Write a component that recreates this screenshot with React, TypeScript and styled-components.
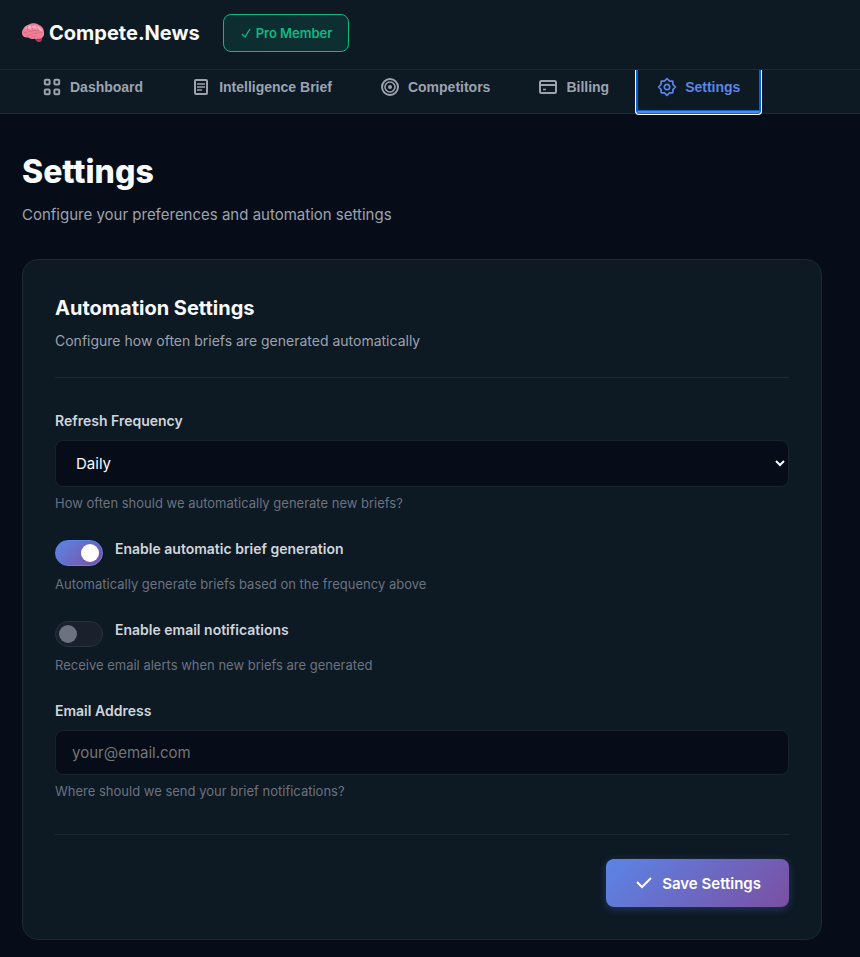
import React, { useState } from "react";
import styled, { createGlobalStyle, css } from "styled-components";

const GlobalStyle = createGlobalStyle`
  *, *::before, *::after { box-sizing: border-box; }
  body {
    margin: 0;
    background: #060d18;
    color: #f9fafb;
    font-family: Inter, "Liberation Sans", sans-serif;
    font-size: 15px;
    line-height: 24px;
  }
`;

const Page = styled.div`
  min-height: 100vh;
`;

const Header = styled.header`
  position: sticky;
  top: 0;
  z-index: 2;
  display: flex;
  align-items: center;
  gap: 23px;
  padding: 14px 22px 17px;
  background: #0d1923;
  border-bottom: 1px solid #1f2933;
`;

const Logo = styled.a`
  display: flex;
  align-items: center;
  gap: 4px;
  color: #f9fafb;
  font-size: 20px;
  font-weight: 700;
  text-decoration: none;
`;

const Badge = styled.span`
  display: flex;
  align-items: center;
  gap: 4px;
  height: 38px;
  padding: 0 16px;
  border: 1px solid #10b981;
  border-radius: 8px;
  background: linear-gradient(135deg, #0d2d30, #0e2f31);
  color: #10b981;
  font-size: 13px;
  font-weight: 600;
`;

const Nav = styled.nav`
  display: flex;
  gap: 8px;
  margin-top: -7px;
  padding: 0 22px;
  background: #0d1923;
  border-bottom: 1px solid #1f2933;
`;

const Tab = styled.button<{ $active?: boolean }>`
  display: flex;
  align-items: center;
  gap: 8px;
  padding: 14px 20px;
  border: 0;
  border-bottom: 2px solid ${(p) => (p.$active ? "#5b85e6" : "transparent")};
  background: none;
  color: ${(p) => (p.$active ? "#5b85e6" : "#9ca3af")};
  font-family: "Liberation Sans", Arial, sans-serif;
  font-size: 14px;
  font-weight: 600;
  line-height: 20px;
  white-space: nowrap;
  cursor: pointer;
  ${(p) =>
    p.$active &&
    css`
      border-radius: 2px;
      outline: 1px solid #0067d0;
      box-shadow: inset 0 0 0 1px #0067d0, 0 0 0 2px #ffffff;
    `}
`;

const Main = styled.main`
  max-width: 844px;
  padding: 36px 22px 17px;
`;

const Title = styled.h1`
  margin: 0 0 9px;
  font-size: 32px;
  font-weight: 800;
  line-height: 44px;
`;

const Subtitle = styled.p`
  margin: 0 0 32px;
  color: #9ca3af;
  font-size: 15px;
`;

const Card = styled.section`
  padding: 32px;
  border: 1px solid #1f2933;
  border-radius: 16px;
  background: #0d1923;
`;

const CardHeader = styled.div`
  margin-bottom: 32px;
  padding-bottom: 24px;
  border-bottom: 1px solid #1f2933;
`;

const CardTitle = styled.h2`
  margin: 0 0 5px;
  font-size: 20px;
  font-weight: 700;
  line-height: 32px;
`;

const CardText = styled.p`
  margin: 0;
  color: #9ca3af;
  font-size: 14px;
`;

const Field = styled.div`
  margin-bottom: 24px;
`;

const labelText = css`
  color: #d1d5db;
  font-size: 14px;
  font-weight: 600;
  line-height: 22px;
`;

const Label = styled.label`
  display: block;
  margin-bottom: 8px;
  ${labelText}
`;

const controlBox = css`
  display: block;
  width: 100%;
  border: 1px solid #19222d;
  border-radius: 8px;
  background: #060d18;
  color: #f9fafb;
  font-family: inherit;
  font-size: 15px;
`;

const Select = styled.select`
  ${controlBox}
  height: 47px;
  padding: 12px 0 12px 16px;
`;

const Input = styled.input`
  ${controlBox}
  height: 45px;
  padding: 12px 16px;
  &::placeholder { color: #757575; }
`;

const Help = styled.p`
  margin: 6px 0 0;
  color: #6b7280;
  font-size: 13px;
  line-height: 21px;
`;

const ToggleLabel = styled.label`
  display: flex;
  align-items: flex-start;
  gap: 12px;
  margin-bottom: 8px;
  cursor: pointer;
  ${labelText}
`;

const Switch = styled.input`
  appearance: none;
  display: flex;
  align-items: center;
  flex: none;
  width: 48px;
  height: 26px;
  margin: 2px 0 0;
  padding: 0 3px;
  border: 1px solid #29313d;
  border-radius: 13px;
  background: #1a202c;
  cursor: pointer;

  &::before {
    content: "";
    width: 18px;
    height: 18px;
    border-radius: 50%;
    background: #6b7280;
  }

  &:checked {
    justify-content: flex-end;
    border-color: #5b85e6;
    background: linear-gradient(135deg, #5b85e6, #7b4fa2);
  }

  &:checked::before { background: #ffffff; }
`;

const Actions = styled.div`
  display: flex;
  justify-content: flex-end;
  margin-top: 32px;
  padding-top: 24px;
  border-top: 1px solid #1f2933;
`;

const SaveButton = styled.button`
  display: flex;
  align-items: center;
  gap: 8px;
  height: 48px;
  padding: 0 28px;
  border: 0;
  border-radius: 8px;
  background: linear-gradient(135deg, #5b85e6, #7b4fa2);
  box-shadow: 0 2px 8px rgba(91, 133, 230, 0.3);
  color: #ffffff;
  font-family: inherit;
  font-size: 15px;
  font-weight: 600;
  cursor: pointer;
`;

const StrokeSvg = styled.svg`
  flex: none;
  fill: none;
  stroke: currentColor;
`;

const Icon = ({ children }: { children: React.ReactNode }) => (
  <StrokeSvg width="20" height="20" viewBox="0 0 20 20" strokeWidth="2" aria-hidden="true">
    {children}
  </StrokeSvg>
);

const BrainIcon = () => (
  <svg width="23" height="22" viewBox="0 0 46 44" aria-hidden="true">
    <path d="M25 32c5-2 13-2 15 1 1 4-3 7-6 7-3 0-7-3-9-8z" fill="#b8405f" />
    <path d="M0 23C0 14 6 7 14 5c6-4 15-3 20 1 6 2 10 8 10 15 1 6-2 11-7 12-5 2-8 1-11 0-5 2-10 1-13-2C6 32 0 28 0 23z" fill="#f0809a" />
    <path d="M6 13c4-6 11-7 15-5 7-2 13 0 15 4 4 1 6 5 5 8-6-5-10-4-14-8-8 3-14 0-21 1z" fill="#ffabba" />
    <g fill="none" stroke="#d66280" strokeWidth="1.4" strokeLinecap="round">
      <path d="M4 22c4-3 6 0 9-3 4-2 6 1 9-1 4-3 8 1 12-1" />
      <path d="M11 8c-2 4 2 5 0 9M20 6c-3 4 2 6 2 11M30 7c-3 3 1 6 4 9" />
      <path d="M9 28c3-4 8-1 11-4 4-3 8 1 13-3 2-1 5 1 8-1M17 31c3-4 9-1 12-4" />
    </g>
    <path d="M29 35c3-1 6-1 9 0" fill="none" stroke="#79243f" strokeWidth="1.5" />
  </svg>
);

const tabs = [
  {
    name: "Dashboard",
    icon: (
      <>
        <rect x="2.8" y="2.8" width="4.8" height="4.8" rx="1" />
        <rect x="12.4" y="2.8" width="4.8" height="4.8" rx="1" />
        <rect x="2.8" y="12.4" width="4.8" height="4.8" rx="1" />
        <rect x="12.4" y="12.4" width="4.8" height="4.8" rx="1" />
      </>
    ),
  },
  {
    name: "Intelligence Brief",
    icon: (
      <>
        <rect x="4" y="3" width="12" height="14" rx="1" />
        <path d="M6 7h8M6 10h8M6 13h5" strokeWidth="1.5" />
      </>
    ),
  },
  {
    name: "Competitors",
    icon: (
      <>
        <circle cx="10" cy="10" r="8" />
        <circle cx="10" cy="10" r="5" strokeWidth="1.6" />
        <circle cx="10" cy="10" r="2" fill="currentColor" stroke="none" />
      </>
    ),
  },
  {
    name: "Billing",
    icon: (
      <>
        <rect x="2" y="4" width="16" height="12" rx="1.5" />
        <path d="M2 8h16" />
        <path d="M5 12.5h3" strokeWidth="1.5" />
      </>
    ),
  },
  {
    name: "Settings",
    icon: (
      <>
        <circle cx="10" cy="10" r="2.7" strokeWidth="1.7" />
        <path
          strokeWidth="1.7"
          strokeLinejoin="round"
          d="M10 1.6L12.6 4.1H15.3Q15.9 4.1 15.9 4.7V7.4L18.4 10L15.9 12.6V15.3Q15.9 15.9 15.3 15.9H12.6L10 18.4L7.4 15.9H4.7Q4.1 15.9 4.1 15.3V12.6L1.6 10L4.1 7.4V4.7Q4.1 4.1 4.7 4.1H7.4z"
        />
      </>
    ),
  },
];

export default function App() {
  const [active, setActive] = useState("Settings");
  const [autoBrief, setAutoBrief] = useState(true);
  const [notify, setNotify] = useState(false);

  return (
    <Page>
      <GlobalStyle />
      <Header>
        <Logo href="#">
          <BrainIcon />
          Compete.News
        </Logo>
        <Badge>
          <StrokeSvg width="12" height="12" viewBox="0 0 12 12" strokeWidth="1.4" aria-hidden="true">
            <path d="M2 7l3 3 5-8" />
          </StrokeSvg>
          Pro Member
        </Badge>
      </Header>
      <Nav>
        {tabs.map((tab) => (
          <Tab
            key={tab.name}
            type="button"
            $active={active === tab.name}
            onClick={() => setActive(tab.name)}
          >
            <Icon>{tab.icon}</Icon>
            {tab.name}
          </Tab>
        ))}
      </Nav>
      <Main>
        <Title>Settings</Title>
        <Subtitle>Configure your preferences and automation settings</Subtitle>
        <Card>
          <CardHeader>
            <CardTitle>Automation Settings</CardTitle>
            <CardText>Configure how often briefs are generated automatically</CardText>
          </CardHeader>
          <Field>
            <Label htmlFor="frequency">Refresh Frequency</Label>
            <Select id="frequency" defaultValue="daily">
              <option value="daily">Daily</option>
              <option value="weekly">Weekly</option>
            </Select>
            <Help>How often should we automatically generate new briefs?</Help>
          </Field>
          <Field>
            <ToggleLabel>
              <Switch
                type="checkbox"
                checked={autoBrief}
                onChange={(e) => setAutoBrief(e.target.checked)}
              />
              Enable automatic brief generation
            </ToggleLabel>
            <Help>Automatically generate briefs based on the frequency above</Help>
          </Field>
          <Field>
            <ToggleLabel>
              <Switch
                type="checkbox"
                checked={notify}
                onChange={(e) => setNotify(e.target.checked)}
              />
              Enable email notifications
            </ToggleLabel>
            <Help>Receive email alerts when new briefs are generated</Help>
          </Field>
          <Field>
            <Label htmlFor="email">Email Address</Label>
            <Input id="email" type="email" placeholder="your@email.com" />
            <Help>Where should we send your brief notifications?</Help>
          </Field>
          <Actions>
            <SaveButton type="button">
              <Icon>
                <path d="M17 5L8 14l-5-5" />
              </Icon>
              Save Settings
            </SaveButton>
          </Actions>
        </Card>
      </Main>
    </Page>
  );
}
